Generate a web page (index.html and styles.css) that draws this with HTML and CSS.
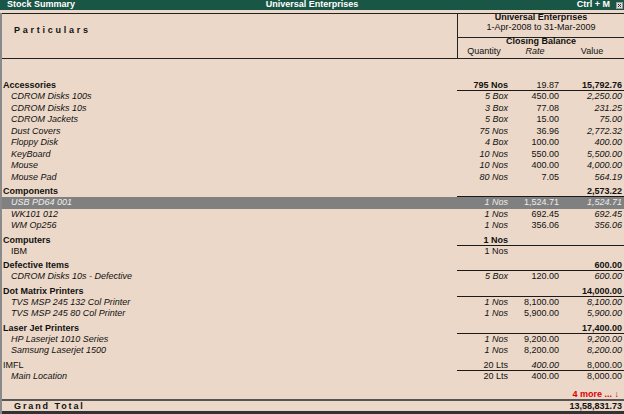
FILE: index.html
```html
<!DOCTYPE html>
<html>
<head>
<meta charset="utf-8">
<title>Stock Summary</title>
<link rel="stylesheet" href="styles.css">
</head>
<body>
<div class="titlebar">
  <span class="t-left">Stock Summary</span>
  <span class="t-center">Universal Enterprises</span>
  <span class="t-right">Ctrl + M<svg class="close" width="7" height="7" viewBox="0 0 7 7"><rect x="0.5" y="0.5" width="6" height="6" fill="#dcdcdc" stroke="#9a9a9a"/><path d="M2 2 L5 5 M5 2 L2 5" stroke="#333" stroke-width="1"/></svg></span>
</div>
<div class="frame">
  <div class="head">
    <div class="head-left">Particulars</div>
    <div class="head-right">
      <div class="co">
        <div class="b">Universal Enterprises</div>
        <div>1-Apr-2008 to 31-Mar-2009</div>
      </div>
      <div class="cb">
        <div class="b">Closing Balance</div>
        <div class="cols"><span>Quantity</span><span class="it">Rate</span><span>Value</span></div>
      </div>
    </div>
  </div>
  <div class="list">
    <div class="row grp"><span class="name">Accessories</span><span class="num q">795 Nos</span><span class="num r nb">19.87</span><span class="num v">15,792.76</span></div>
    <div class="row"><span class="name">CDROM Disks 100s</span><span class="num q">5 Box</span><span class="num r">450.00</span><span class="num v">2,250.00</span></div>
    <div class="row"><span class="name">CDROM Disks 10s</span><span class="num q">3 Box</span><span class="num r">77.08</span><span class="num v">231.25</span></div>
    <div class="row"><span class="name">CDROM Jackets</span><span class="num q">5 Box</span><span class="num r">15.00</span><span class="num v">75.00</span></div>
    <div class="row"><span class="name">Dust Covers</span><span class="num q">75 Nos</span><span class="num r">36.96</span><span class="num v">2,772.32</span></div>
    <div class="row"><span class="name">Floppy Disk</span><span class="num q">4 Box</span><span class="num r">100.00</span><span class="num v">400.00</span></div>
    <div class="row"><span class="name">KeyBoard</span><span class="num q">10 Nos</span><span class="num r">550.00</span><span class="num v">5,500.00</span></div>
    <div class="row"><span class="name">Mouse</span><span class="num q">10 Nos</span><span class="num r">400.00</span><span class="num v">4,000.00</span></div>
    <div class="row"><span class="name">Mouse Pad</span><span class="num q">80 Nos</span><span class="num r">7.05</span><span class="num v">564.19</span></div>
    <div class="row grp"><span class="name">Components</span><span class="num q"></span><span class="num r"></span><span class="num v">2,573.22</span></div>
    <div class="row sel"><span class="name">USB PD64 001</span><span class="num q">1 Nos</span><span class="num r">1,524.71</span><span class="num v">1,524.71</span></div>
    <div class="row"><span class="name">WK101 012</span><span class="num q">1 Nos</span><span class="num r">692.45</span><span class="num v">692.45</span></div>
    <div class="row"><span class="name">WM Op256</span><span class="num q">1 Nos</span><span class="num r">356.06</span><span class="num v">356.06</span></div>
    <div class="row grp"><span class="name">Computers</span><span class="num q">1 Nos</span><span class="num r"></span><span class="num v"></span></div>
    <div class="row"><span class="name up">IBM</span><span class="num q up">1 Nos</span><span class="num r"></span><span class="num v"></span></div>
    <div class="row grp"><span class="name">Defective Items</span><span class="num q"></span><span class="num r"></span><span class="num v">600.00</span></div>
    <div class="row"><span class="name">CDROM Disks 10s - Defective</span><span class="num q">5 Box</span><span class="num r">120.00</span><span class="num v">600.00</span></div>
    <div class="row grp"><span class="name">Dot Matrix Printers</span><span class="num q"></span><span class="num r"></span><span class="num v">14,000.00</span></div>
    <div class="row"><span class="name">TVS MSP 245 132 Col Printer</span><span class="num q">1 Nos</span><span class="num r">8,100.00</span><span class="num v">8,100.00</span></div>
    <div class="row"><span class="name">TVS MSP 245 80 Col Printer</span><span class="num q">1 Nos</span><span class="num r">5,900.00</span><span class="num v">5,900.00</span></div>
    <div class="row grp"><span class="name">Laser Jet Printers</span><span class="num q"></span><span class="num r"></span><span class="num v">17,400.00</span></div>
    <div class="row"><span class="name">HP Laserjet 1010 Series</span><span class="num q">1 Nos</span><span class="num r">9,200.00</span><span class="num v">9,200.00</span></div>
    <div class="row"><span class="name">Samsung Laserjet 1500</span><span class="num q">1 Nos</span><span class="num r">8,200.00</span><span class="num v">8,200.00</span></div>
    <div class="row grp plain"><span class="name">IMFL</span><span class="num q">20 Lts</span><span class="num r it">400.00</span><span class="num v">8,000.00</span></div>
    <div class="row"><span class="name">Main Location</span><span class="num q up">20 Lts</span><span class="num r">400.00</span><span class="num v up">8,000.00</span></div>
  </div>
  <div class="more">4 more ... <span class="arrow">↓</span></div>
  <div class="total"><span class="t-label">Grand Total</span><span class="t-val">13,58,831.73</span></div>
</div>
</body>
</html>
```

FILE: styles.css
```css
html, body {
  margin: 0;
  padding: 0;
}

body {
  width: 624px;
  height: 414px;
  overflow: hidden;
  background: #ebd8c8;
  font-family: "Liberation Sans", Arial, sans-serif;
  font-size: 9px;
  color: #111;
  display: flex;
  flex-direction: column;
}

.titlebar {
  flex: none;
  height: 10px;
  line-height: 8px;
  background: #1a5646;
  color: #fff;
  font-weight: bold;
  display: grid;
  grid-template-columns: 1fr auto 1fr;
  white-space: nowrap;
}

.t-left {
  padding-left: 7px;
}

.t-right {
  justify-self: end;
  display: flex;
  align-items: flex-start;
}

.close {
  margin: 2px 1px 0 6px;
}

.frame {
  flex: 1;
  min-height: 0;
  margin-top: 3px;
  border-left: 2px solid #8a8a8a;
  display: flex;
  flex-direction: column;
}

.head {
  flex: none;
  height: 44px;
  border-top: 1px solid #222;
  border-bottom: 1px solid #222;
  display: grid;
  grid-template-columns: 1fr 167px;
}

.head-left {
  font-weight: bold;
  letter-spacing: 2.75px;
  line-height: 10px;
  padding: 11px 0 0 12px;
}

.head-right {
  border-left: 1px solid #222;
  display: flex;
  flex-direction: column;
  text-align: center;
  line-height: 10px;
}

.co {
  margin-top: -2px;
  height: 25px;
  border-bottom: 1px solid #222;
}

.cb {
  margin-top: -2px;
}

.b {
  font-weight: bold;
}

.it {
  font-style: italic;
}

.cols {
  display: grid;
  grid-template-columns: 52px 50px 64px;
}

.list {
  flex: 1;
  padding-top: 18px;
}

.row {
  display: grid;
  grid-template-columns: 1fr 53px 50px 64px;
  line-height: 11.5px;
  white-space: nowrap;
}

.row .name {
  padding-left: 9px;
  font-style: italic;
}

.num {
  text-align: right;
}

.q {
  padding-right: 2px;
  font-style: italic;
}

.r {
  padding-right: 1px;
}

.v {
  padding-right: 2px;
  font-style: italic;
}

.row .up {
  font-style: normal;
}

.grp {
  line-height: 10px;
  font-weight: bold;
}

.grp > span {
  padding-top: 3px;
}

.grp .name {
  padding-left: 1px;
  padding-bottom: 1px;
  font-style: normal;
}

.grp .num {
  border-bottom: 1px solid #1a1a1a;
  font-style: normal;
}

.grp .num.it {
  font-style: italic;
}

.grp .nb {
  font-weight: normal;
}

.plain {
  font-weight: normal;
}

.sel {
  background: #808080;
  color: #ececec;
}

.more {
  flex: none;
  line-height: 10px;
  text-align: right;
  color: #e00000;
  font-weight: bold;
  padding-right: 5px;
}

.arrow {
  font-weight: normal;
}

.total {
  flex: none;
  height: 10px;
  line-height: 10px;
  border-top: 2px solid #555;
  border-bottom: 3px solid #333;
  display: grid;
  grid-template-columns: 1fr auto;
  font-weight: bold;
}

.t-label {
  padding-left: 12px;
  letter-spacing: 1.9px;
}

.t-val {
  padding-right: 2px;
}
```
